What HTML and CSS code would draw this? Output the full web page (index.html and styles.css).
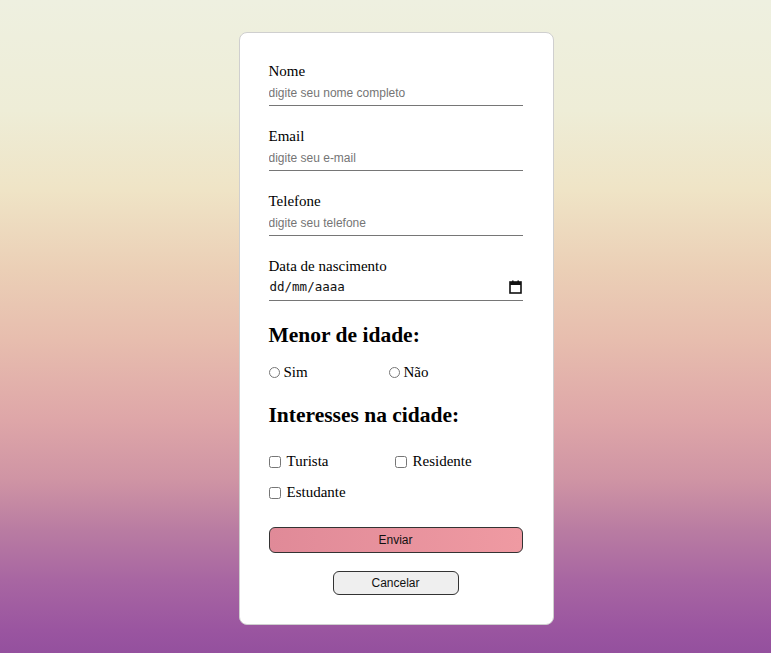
FILE: index.html
```html
<!DOCTYPE html>
<html lang="pt-BR">
<head>
<meta charset="utf-8">
<title>Cadastro</title>
<link rel="stylesheet" href="styles.css">
</head>
<body>
<main class="page">
  <form class="card">
    <div class="field">
      <label class="field-label" for="nome">Nome</label>
      <input class="field-input" id="nome" type="text" placeholder="digite seu nome completo">
    </div>
    <div class="field">
      <label class="field-label" for="email">Email</label>
      <input class="field-input" id="email" type="text" placeholder="digite seu e-mail">
    </div>
    <div class="field">
      <label class="field-label" for="tel">Telefone</label>
      <input class="field-input" id="tel" type="text" placeholder="digite seu telefone">
    </div>
    <div class="field">
      <label class="field-label">Data de nascimento</label>
      <div class="date-input">
        <span class="date-text">dd/mm/aaaa</span>
        <svg class="date-icon" width="13" height="14" viewBox="0 0 13 14"><rect x="1" y="2" width="11" height="11" fill="none" stroke="#111" stroke-width="1.6"/><rect x="1" y="2" width="11" height="3" fill="#111"/><rect x="3" y="0.5" width="1.6" height="2" fill="#111"/><rect x="8.4" y="0.5" width="1.6" height="2" fill="#111"/></svg>
      </div>
    </div>

    <h2 class="section-title">Menor de idade:</h2>
    <div class="radio-row">
      <label class="radio-item"><input type="radio" name="menor" class="radio"><span>Sim</span></label>
      <label class="radio-item"><input type="radio" name="menor" class="radio"><span>Não</span></label>
    </div>

    <h2 class="section-title second">Interesses na cidade:</h2>
    <div class="check-grid">
      <label class="check-item"><input type="checkbox" class="check"><span>Turista</span></label>
      <label class="check-item"><input type="checkbox" class="check"><span>Residente</span></label>
      <label class="check-item"><input type="checkbox" class="check"><span>Estudante</span></label>
    </div>

    <button type="button" class="btn-send">Enviar</button>
    <div class="cancel-wrap">
      <button type="button" class="btn-cancel">Cancelar</button>
    </div>
  </form>
</main>
</body>
</html>
```

FILE: styles.css
```css
html, body {
  margin: 0;
  padding: 0;
  height: 100%;
}
body {
  background: linear-gradient(to bottom,
    #eef0e0 0px,
    #eeedd7 110px,
    #efe4c6 190px,
    #ebcfb6 270px,
    #e7bdae 340px,
    #dea6a8 420px,
    #cf94a4 480px,
    #b97ca2 530px,
    #a866a2 580px,
    #9a55a0 630px,
    #94509e 653px);
  font-family: "Liberation Serif", "Times New Roman", serif;
  color: #000;
  overflow: hidden;
}
.page {
  display: flex;
  justify-content: center;
  padding: 32px 0 0 21px;
}
.card {
  box-sizing: border-box;
  width: 315px;
  height: 593px;
  background: #fff;
  border: 1px solid #cfcfcf;
  border-radius: 8px;
  padding: 29px 30px 0 29px;
  display: flex;
  flex-direction: column;
}
.field {
  display: flex;
  flex-direction: column;
  margin-bottom: 21px;
}
.field-label {
  font-size: 15px;
  line-height: 18px;
  margin-bottom: 3px;
}
.field-input {
  border: none;
  border-bottom: 1px solid #767676;
  outline: none;
  padding: 3px 0 4px 0;
  margin: 0;
  font-family: "Liberation Sans", Arial, sans-serif;
  font-size: 12px;
  line-height: 15px;
  background: transparent;
}
.field-input::placeholder {
  color: #757575;
}
.date-input {
  display: flex;
  align-items: center;
  justify-content: space-between;
  border-bottom: 1px solid #767676;
  padding: 0 1px 5px 1px;
  height: 17px;
}
.date-text {
  font-family: "DejaVu Sans Mono", "Liberation Mono", monospace;
  font-size: 12.5px;
  color: #111;
}
.date-icon {
  display: block;
}
.section-title {
  font-size: 21.5px;
  font-weight: bold;
  margin: 0;
  line-height: 26px;
}
.section-title.second {
  margin-top: 21px;
}
.radio-row {
  display: flex;
  margin-top: 16px;
  font-size: 15px;
}
.radio-item {
  display: flex;
  align-items: center;
  width: 120px;
}
.radio {
  margin: 0 4px 0 0;
  width: 11px;
  height: 11px;
}
.check-grid {
  display: grid;
  grid-template-columns: 126px 126px;
  row-gap: 14px;
  margin-top: 25px;
  font-size: 15px;
}
.check-item {
  display: flex;
  align-items: center;
}
.check {
  margin: 0 6px 0 0;
  width: 12px;
  height: 12px;
}
.btn-send {
  margin-top: 26px;
  height: 26px;
  width: 100%;
  border: 1px solid #333;
  border-radius: 6px;
  background: linear-gradient(to right, #e08a98, #ef9aa2);
  font-family: "Liberation Sans", Arial, sans-serif;
  font-size: 12px;
  color: #111;
}
.cancel-wrap {
  display: flex;
  justify-content: center;
  margin-top: 18px;
}
.btn-cancel {
  width: 126px;
  height: 24px;
  border: 1px solid #333;
  border-radius: 6px;
  background: #efefef;
  font-family: "Liberation Sans", Arial, sans-serif;
  font-size: 12px;
  color: #111;
}
```
